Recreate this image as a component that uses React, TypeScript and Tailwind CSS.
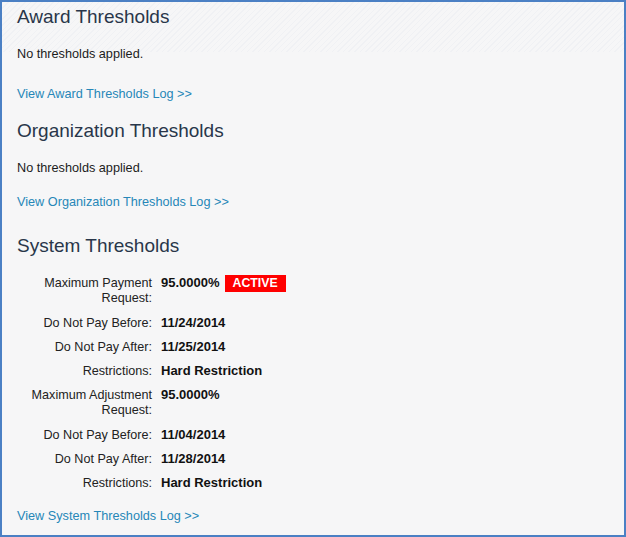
import React from "react"

type Row = { label: string; value: string; active?: boolean; tall?: boolean }

const paymentRows: Row[] = [
  { label: "Maximum Payment Request:", value: "95.0000%", active: true, tall: true },
  { label: "Do Not Pay Before:", value: "11/24/2014" },
  { label: "Do Not Pay After:", value: "11/25/2014" },
  { label: "Restrictions:", value: "Hard Restriction" },
  { label: "Maximum Adjustment Request:", value: "95.0000%", tall: true },
  { label: "Do Not Pay Before:", value: "11/04/2014" },
  { label: "Do Not Pay After:", value: "11/28/2014" },
  { label: "Restrictions:", value: "Hard Restriction" },
]

function Heading({ children, className = "" }: { children: React.ReactNode; className?: string }) {
  return <h2 className={`text-[19px] leading-[24px] text-[#29364a] ${className}`}>{children}</h2>
}

function LogLink({ children, className = "" }: { children: React.ReactNode; className?: string }) {
  return (
    <a href="#" className={`block w-fit text-[12.7px] leading-[16px] text-[#2687b8] ${className}`}>
      {children}
    </a>
  )
}

export default function App() {
  return (
    <div
      className="h-[537px] w-[626px] border-2 border-[#4b80c4] bg-[#f6f6f7] bg-[image:repeating-linear-gradient(135deg,#f0f1f4_0px,#f0f1f4_1px,transparent_1px,transparent_4px)] bg-[length:100%_50px] bg-no-repeat pl-[15px] pt-[3px] text-[#1c1c1c]"
      style={{ fontFamily: '"Liberation Sans", Arial, sans-serif' }}
    >
      {/* Award */}
      <Heading>Award Thresholds</Heading>
      <p className="mt-[17px] text-[12.7px] leading-[16px]">No thresholds applied.</p>
      <LogLink className="mt-[24px]">View Award Thresholds Log &gt;&gt;</LogLink>

      {/* Organization */}
      <Heading className="mt-[17px]">Organization Thresholds</Heading>
      <p className="mt-[17px] text-[12.7px] leading-[16px]">No thresholds applied.</p>
      <LogLink className="mt-[18px]">View Organization Thresholds Log &gt;&gt;</LogLink>

      {/* System */}
      <Heading className="mt-[24px]">System Thresholds</Heading>
      <div className="mt-[18px] flex flex-col gap-[9px]">
        {paymentRows.map((row, i) => (
          <div key={i} className={`flex items-start ${row.tall ? "mb-[1px]" : ""}`}>
            <div className="w-[137px] pl-[6px] pr-[2px] text-right text-[12.6px] leading-[15px] text-[#222]">
              {row.label}
            </div>
            <div className="ml-[7px] -mt-[1px] flex items-start text-[13px] font-bold leading-[15px] text-[#111]">
              <span>{row.value}</span>
              {row.active && (
                <span className="ml-[5px] bg-[#ff0000] px-[8px] text-[12.3px] leading-[17px] text-white">
                  ACTIVE
                </span>
              )}
            </div>
          </div>
        ))}
      </div>
      <LogLink className="mt-[17px]">View System Thresholds Log &gt;&gt;</LogLink>
    </div>
  )
}
